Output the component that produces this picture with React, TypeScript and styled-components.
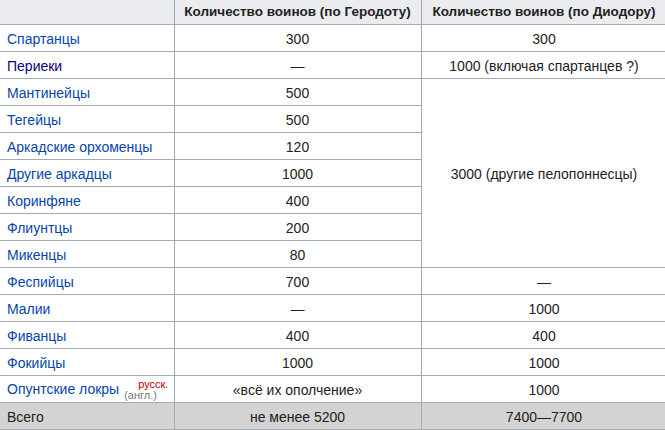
import styled, { createGlobalStyle } from "styled-components"

const GlobalStyle = createGlobalStyle`
    html, body {
        margin: 0;
        padding: 0;
        background: #ffffff;
        overflow: hidden;
    }
`

type row = {
    name: string,
    visited?: boolean,
    herodotus: string,
    diodorus?: string,
    span?: number,
    interwiki?: boolean
}

const rows: row[] = [
    { name: "Спартанцы", herodotus: "300", diodorus: "300" },
    { name: "Периеки", visited: true, herodotus: "—", diodorus: "1000 (включая спартанцев ?)" },
    { name: "Мантинейцы", herodotus: "500", diodorus: "3000 (другие пелопоннесцы)", span: 7 },
    { name: "Тегейцы", herodotus: "500" },
    { name: "Аркадские орхоменцы", herodotus: "120" },
    { name: "Другие аркадцы", herodotus: "1000" },
    { name: "Коринфяне", herodotus: "400" },
    { name: "Флиунтцы", herodotus: "200" },
    { name: "Микенцы", herodotus: "80" },
    { name: "Феспийцы", herodotus: "700", diodorus: "—" },
    { name: "Малии", herodotus: "—", diodorus: "1000" },
    { name: "Фиванцы", herodotus: "400", diodorus: "400" },
    { name: "Фокийцы", herodotus: "1000", diodorus: "1000" },
    { name: "Опунтские локры", herodotus: "«всё их ополчение»", diodorus: "1000", interwiki: true },
]

const Table = styled.table`
    border-collapse: collapse;
    table-layout: fixed;
    width: 667px;
    font-family: "Liberation Sans", Arial, sans-serif;
    font-size: 14px;
    color: #222222;
`

const HeadCell = styled.th`
    height: 24px;
    padding: 0 4px;
    background-color: #eaecf0;
    border-right: 1px solid #a2a9b1;
    border-bottom: 1px solid #a2a9b1;
    font-size: 13.5px;
    font-weight: 700;
    text-align: center;
    line-height: 16px;
    white-space: nowrap;
`

const Cell = styled.td<{ $align?: string, $total?: boolean }>`
    height: 25px;
    padding: 1px 7px 0;
    border-right: 1px solid #a2a9b1;
    border-bottom: 1px solid #a2a9b1;
    background-color: ${p => p.$total ? "#d3d3d3" : "#ffffff"};
    text-align: ${p => p.$align || "center"};
    line-height: 16px;
    white-space: nowrap;
`

const Link = styled.a<{ $visited?: boolean }>`
    color: ${p => p.$visited ? "#0b0080" : "#0645ad"};
    text-decoration: none;
    cursor: pointer;
`

const Interwiki = styled.span`
    display: inline-flex;
    flex-direction: column;
    vertical-align: 6px;
    margin-left: 5px;
    font-size: 11px;
    line-height: 11px;
`

const Sup = styled.span`
    margin-left: 14px;
    color: #ba0000;
`

const Sub = styled.span`
    color: #72777d;
`

export default function App() {
    return (
        <>
            <GlobalStyle />
            <Table>
                <colgroup>
                    <col style={{ width: 174 }} />
                    <col style={{ width: 247 }} />
                    <col style={{ width: 246 }} />
                </colgroup>
                <thead>
                    <tr>
                        <HeadCell></HeadCell>
                        <HeadCell>Количество воинов (по Геродоту)</HeadCell>
                        <HeadCell>Количество воинов (по Диодору)</HeadCell>
                    </tr>
                </thead>
                <tbody>
                    {rows.map(r => (
                        <tr key={r.name}>
                            <Cell $align="left">
                                <Link $visited={r.visited}>{r.name}</Link>
                                {r.interwiki && (
                                    <Interwiki>
                                        <Sup>русск.</Sup>
                                        <Sub>(англ.)</Sub>
                                    </Interwiki>
                                )}
                            </Cell>
                            <Cell>{r.herodotus}</Cell>
                            {r.diodorus !== undefined && <Cell rowSpan={r.span}>{r.diodorus}</Cell>}
                        </tr>
                    ))}
                    <tr>
                        <Cell $align="left" $total>Всего</Cell>
                        <Cell $total>не менее 5200</Cell>
                        <Cell $total>7400—7700</Cell>
                    </tr>
                </tbody>
            </Table>
        </>
    )
}
